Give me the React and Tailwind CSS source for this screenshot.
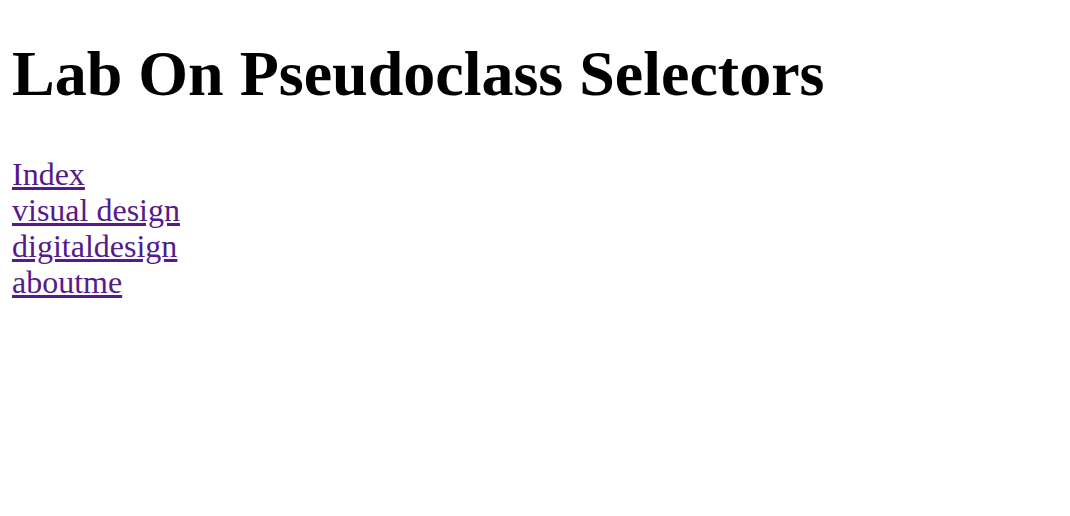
export default function App() {
  const links = ["Index", "visual design", "digitaldesign", "aboutme"];
  return (
    <div className="min-h-[516px] bg-white px-[12px] font-['Liberation_Serif',serif] text-[32px] text-black">
      <h1 className="pt-[37px] mb-[45px] text-[64px] font-bold leading-[normal]">
        Lab On Pseudoclass Selectors
      </h1>
      <nav className="flex flex-col items-start leading-[36px]">
        {links.map((l) => (
          <a key={l} href="#" className="text-[#551a8b] underline">
            {l}
          </a>
        ))}
      </nav>
    </div>
  );
}
